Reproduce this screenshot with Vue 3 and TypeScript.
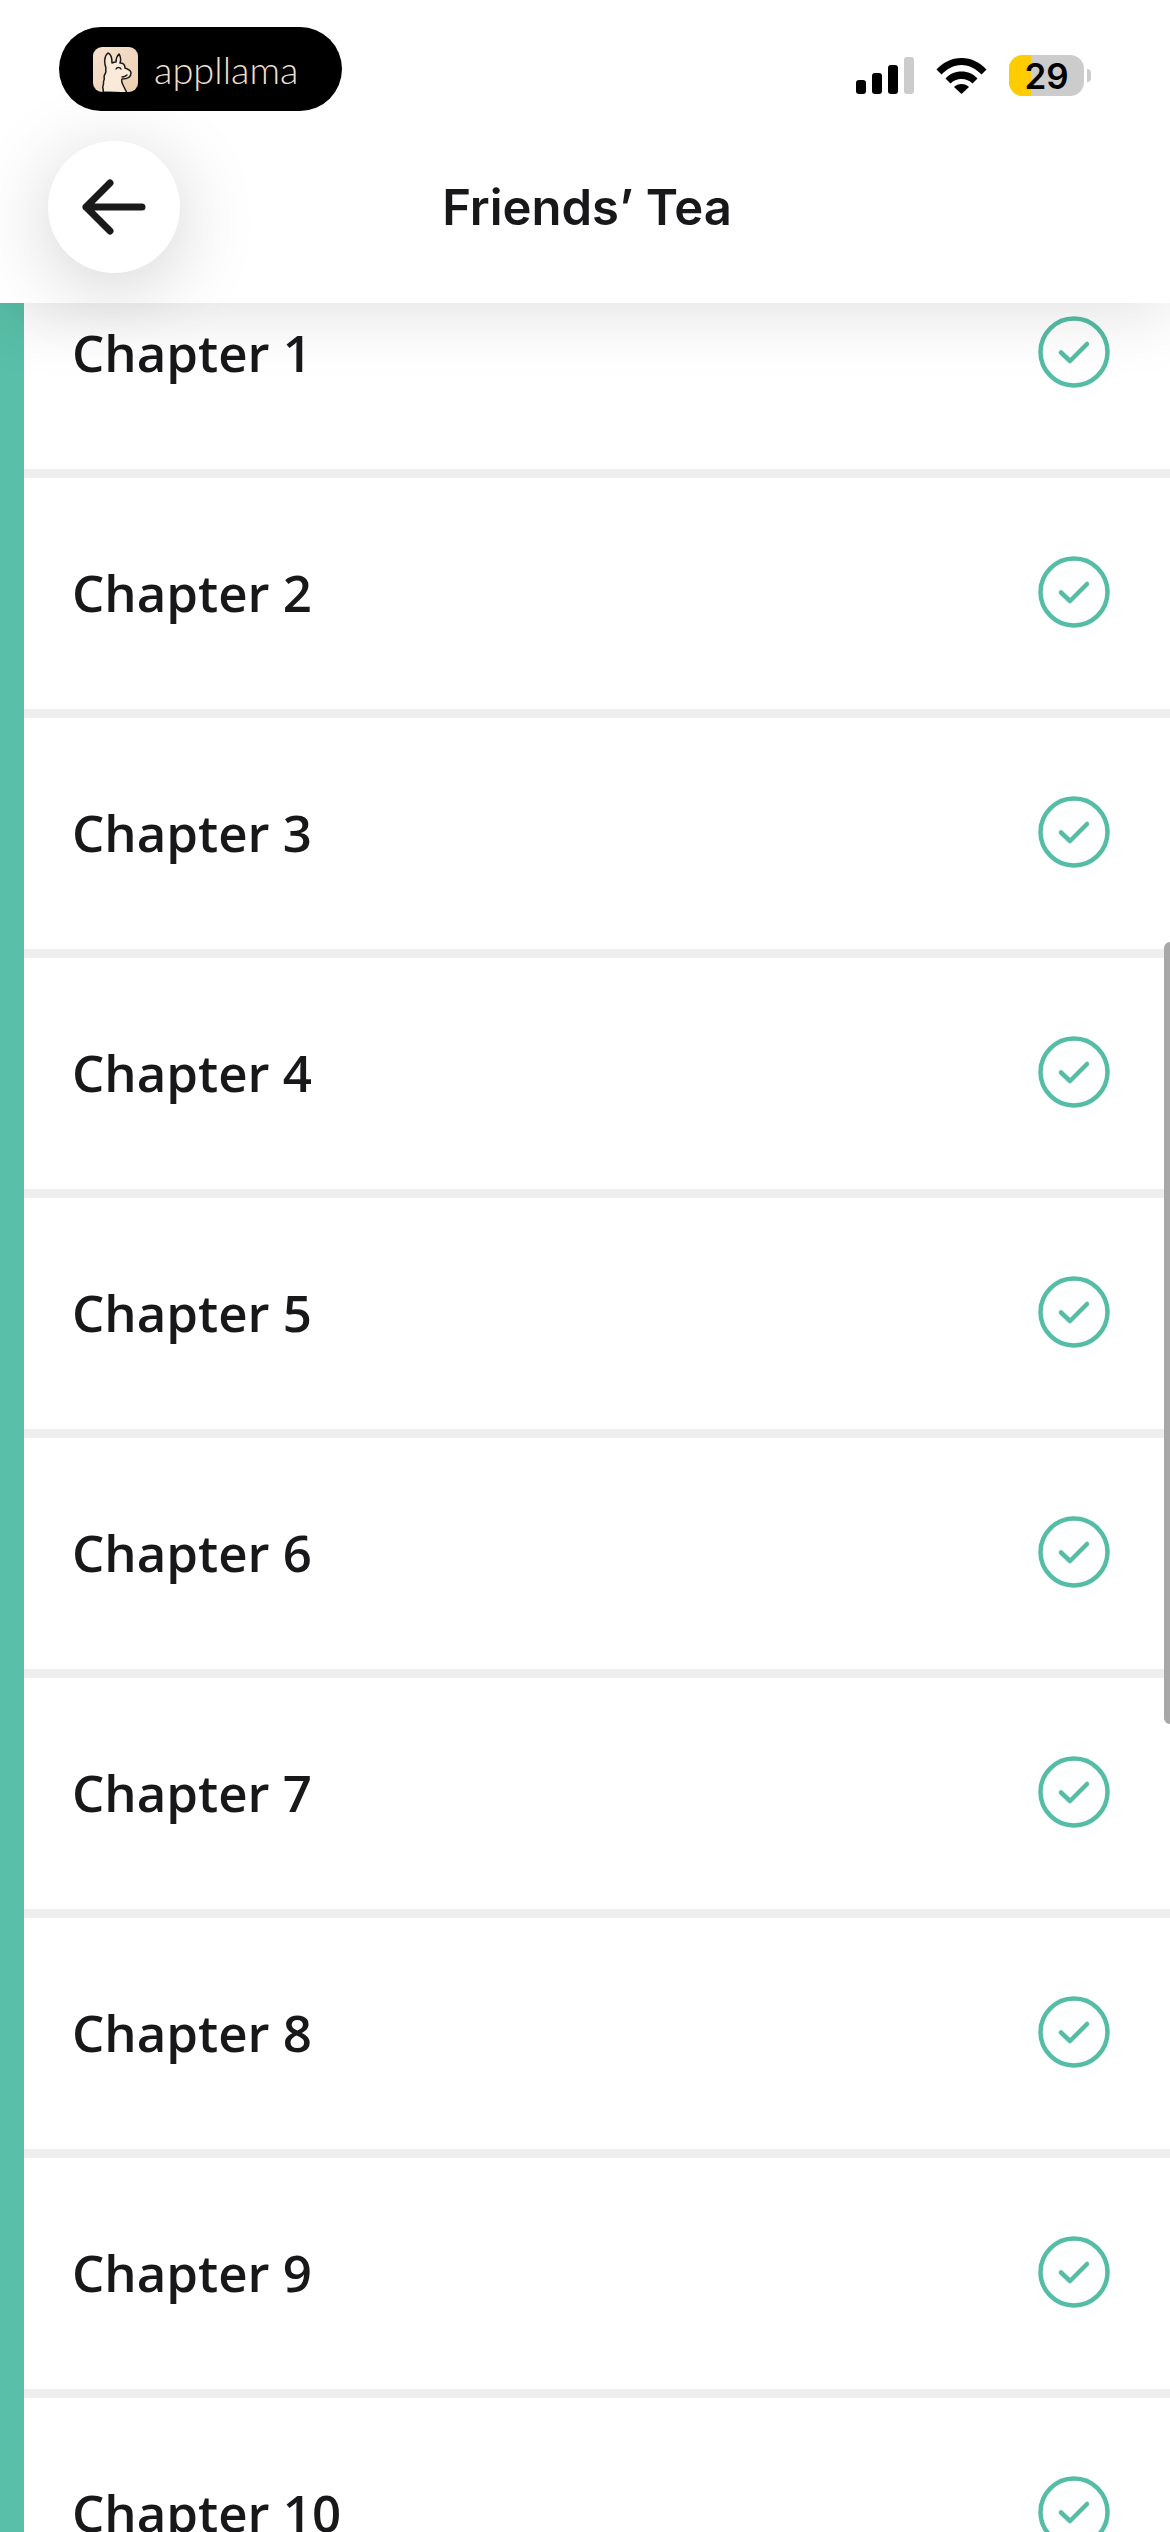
<template>
  <div class="screen">
    <header class="top">
      <div class="status">
        <div class="brand">
          <svg class="brand-icon" viewBox="0 0 45 45">
            <defs>
              <linearGradient id="tile" x1="0" y1="0" x2="1" y2="1">
                <stop offset="0" stop-color="#f6e3cf" />
                <stop offset="1" stop-color="#ebcfb0" />
              </linearGradient>
            </defs>
            <rect width="45" height="45" rx="9" fill="url(#tile)" />
            <path
              d="M10 45c1-3-1-4 0-6s0-4 1-6-1-3 1-6 0-4 1-6c-2-5-2-12 2-15 3 1 4 6 4 10 2-1 3-1 4-1 0-3 1-6 3-8 2 3 2 6 1 9 3 0 5 2 5 5 3 1 6 2 6 5 0 4-4 6-9 6-1 2 0 4 1 6l4 8z"
              fill="#f9ead9"
              stroke="#1d1a17"
              stroke-width="1.5"
              stroke-linejoin="round"
            />
            <path d="M23 22c1-2 4-2 5 0M29 30c2 0 4-1 5-2" fill="none" stroke="#1d1a17" stroke-width="1.4" stroke-linecap="round" />
          </svg>
          <span class="brand-name">appllama</span>
        </div>
        <div class="indicators">
          <div class="signal">
            <i class="bar b1"></i>
            <i class="bar b2"></i>
            <i class="bar b3"></i>
            <i class="bar b4"></i>
          </div>
          <svg class="wifi" viewBox="0 0 51 37">
            <path d="M0.5 12.5C7 5.5 15.5 1 25.5 1s18.500 4.500 25 11.500l-5 5C40 12 33.500 8 25.500 8S11 12 5.500 17.500z" />
            <path d="M9.500 21.500C13.500 17 19 14.500 25.500 14.500S37.500 17 41.500 21.500l-5 5C33.500 23.500 30 22 25.500 22s-8 1.500-11 4.500z" />
            <path d="M18 30c2-2 4.500-3 7.500-3s5.500 1 7.500 3l-7.500 7z" />
          </svg>
          <div class="battery">
            <div class="cell">
              <i class="charge"></i>
              <span class="level">29</span>
            </div>
            <i class="tip"></i>
          </div>
        </div>
      </div>

      <div class="nav">
        <button class="back" title="Back">
          <svg viewBox="0 0 64 56" fill="none" stroke="#1a1a1a" stroke-width="7" stroke-linecap="round" stroke-linejoin="round">
            <path d="M60 28H4M28 4 4 28l24 24" />
          </svg>
        </button>
        <h1 class="title">Friends’ Tea</h1>
        <span></span>
      </div>
    </header>

    <main class="list">
      <div v-for="c in chapters" :key="c" class="row">
        <span class="row-name">Chapter {{ c }}</span>
        <svg class="done" viewBox="0 0 72 72" fill="none" stroke="#55bda5" stroke-linecap="round" stroke-linejoin="round">
          <circle cx="36" cy="36" r="33.500" stroke-width="4.500" />
          <path d="M23 36.500 32 45l17-17" stroke-width="4.500" />
        </svg>
      </div>
    </main>

    <div class="scrollbar"></div>
  </div>
</template>

<script setup lang="ts">
const chapters: number[] = Array.from({ length: 10 }, (_, i) => i + 1)
</script>

<style>
html,
body {
  margin: 0;
  background: #fff;
}
</style>

<style scoped>
.screen {
  position: relative;
  width: 1170px;
  height: 2532px;
  overflow: hidden;
  background: #fff;
  font-family: "Open Sans", sans-serif;
}

.top {
  position: relative;
  z-index: 2;
  height: 303px;
  box-sizing: border-box;
  background: #fff;
  box-shadow: 0 16px 60px rgba(0, 0, 0, 0.1);
}

.status {
  display: flex;
  align-items: flex-start;
  justify-content: space-between;
  height: 141px;
  box-sizing: border-box;
  padding: 27px 79px 0 59px;
}

.brand {
  display: flex;
  align-items: center;
  gap: 16px;
  width: 283px;
  height: 84px;
  box-sizing: border-box;
  padding-left: 34px;
  border-radius: 42px;
  background: #000;
}

.brand-icon {
  width: 45px;
  height: 45px;
}

.brand-name {
  font-family: Lato, sans-serif;
  font-size: 38px;
  font-weight: 300;
  line-height: 1;
  color: #f0dfcc;
}

.indicators {
  display: flex;
  align-items: flex-start;
  gap: 22px;
  padding-top: 30px;
}

.signal {
  display: flex;
  align-items: flex-end;
  gap: 6px;
  height: 37px;
}

.bar {
  width: 10px;
  border-radius: 3px;
  background: #000;
}

.b1 { height: 14px; }
.b2 { height: 21px; }
.b3 { height: 29px; }
.b4 { height: 37px; background: #ccc; }

.wifi {
  width: 51px;
  height: 37px;
  fill: #000;
}

.battery {
  display: flex;
  align-items: center;
  gap: 3px;
  margin-top: -2px;
}

.cell {
  position: relative;
  width: 75px;
  height: 41px;
  overflow: hidden;
  border-radius: 14px;
  background: #ccc;
}

.charge {
  position: absolute;
  left: 0;
  top: 0;
  bottom: 0;
  width: 22px;
  background: #fc0;
}

.level {
  position: absolute;
  inset: 0;
  display: flex;
  align-items: center;
  justify-content: center;
  font-family: Inter, sans-serif;
  font-size: 35px;
  font-weight: 600;
  color: #000;
}

.tip {
  width: 4px;
  height: 13px;
  border-radius: 0 4px 4px 0;
  background: #ccc;
}

.nav {
  display: grid;
  grid-template-columns: 1fr auto 1fr;
  align-items: center;
  padding-left: 48px;
}

.back {
  display: flex;
  align-items: center;
  justify-content: center;
  width: 132px;
  height: 132px;
  padding: 0;
  border: none;
  border-radius: 50%;
  background: #fff;
  box-shadow: 0 14px 80px rgba(0, 0, 0, 0.18);
}

.back svg {
  width: 64px;
  height: 56px;
}

.title {
  margin: 0 44px 0 0;
  font-family: Inter, sans-serif;
  font-size: 49px;
  font-weight: 600;
  color: #18181a;
}

.list {
  margin-top: -65px;
  border-left: 24px solid #59bfa8;
}

.row {
  display: flex;
  align-items: center;
  justify-content: space-between;
  height: 231px;
  padding: 0 60px 0 48px;
  border-bottom: 9px solid #eee;
  background: #fff;
}

.row-name {
  margin-top: -3px;
  font-size: 51px;
  font-weight: 600;
  color: #18181a;
}

.done {
  width: 72px;
  height: 72px;
  margin-top: -3px;
}

.scrollbar {
  position: absolute;
  top: 942px;
  right: 0;
  width: 6px;
  height: 782px;
  border-radius: 6px 0 0 6px;
  background: #a8a8a8;
}
</style>
